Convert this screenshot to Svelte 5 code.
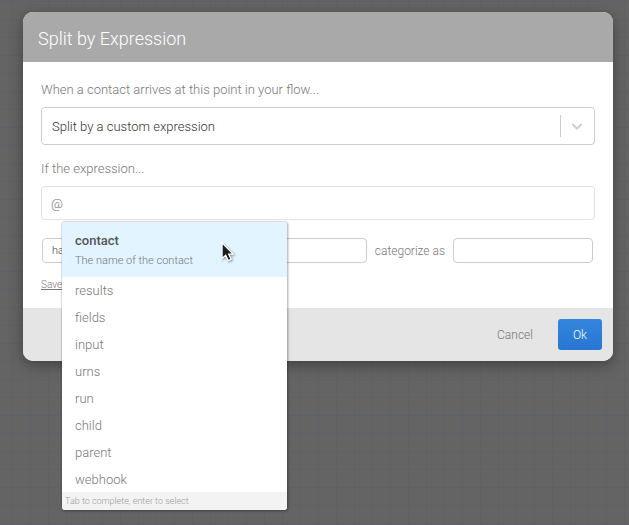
<script>
  let kind = $state('expression');
  let expression = $state('@');
  let operator = $state('phrase');
  let argument = $state('');
  let category = $state('');
  let selected = $state(0);

  const options = [
    { name: 'contact', summary: 'The name of the contact' },
    { name: 'results', summary: 'Results collected in this flow' },
    { name: 'fields', summary: 'Custom fields on the contact' },
    { name: 'input', summary: 'The last input from the contact' },
    { name: 'urns', summary: 'URNs on the contact' },
    { name: 'run', summary: 'Run details' },
    { name: 'child', summary: 'Run details after running a child flow' },
    { name: 'parent', summary: 'Run details if run by a parent flow' },
    { name: 'webhook', summary: 'The parsed response of the last webhook' }
  ];
</script>

<main>
  <section class="dialog" role="dialog" aria-labelledby="title">
    <header>
      <h1 id="title">Split by Expression</h1>
    </header>

    <form id="router" class="body">
      <label for="kind">When a contact arrives at this point in your flow...</label>
      <div class="picker">
        <select id="kind" bind:value={kind}>
          <option value="expression">Split by a custom expression</option>
        </select>
        <span class="divider"></span>
        <svg class="chevron" viewBox="0 0 20 20" aria-hidden="true">
          <path d="M4.516 7.548c0.436-0.446 1.043-0.481 1.576 0l3.908 3.747 3.908-3.747c0.533-0.481 1.141-0.446 1.574 0 0.436 0.445 0.408 1.197 0 1.615-0.406 0.418-4.695 4.502-4.695 4.502-0.217 0.223-0.502 0.335-0.787 0.335s-0.57-0.112-0.789-0.335c0 0-4.287-4.084-4.695-4.502s-0.436-1.17 0-1.615z" />
        </svg>
      </div>

      <label for="expression">If the expression...</label>
      <div class="completion">
        <input id="expression" type="text" autocomplete="off" bind:value={expression} />
        <div class="popup">
          <ul role="listbox" aria-label="Completions">
            {#each options as option, i}
              <li
                role="option"
                aria-selected={i === selected}
                class:selected={i === selected}
                onmouseenter={() => (selected = i)}
              >
                <span class="name">{option.name}</span>
                {#if i === selected}
                  <span class="summary">{option.summary}</span>
                {/if}
              </li>
            {/each}
          </ul>
          <p class="hint">Tab to complete, enter to select</p>
          <svg class="pointer" viewBox="0 0 14 22" aria-hidden="true">
            <path d="M1 1V18L5 14.5L7.8 20.5L11 19L8.3 13.3H13.2Z" fill="#1c1c1c" stroke="#fff" stroke-width="1.4" />
          </svg>
        </div>
      </div>

      <div class="case">
        <select class="operator" aria-label="Operator" bind:value={operator}>
          <option value="phrase">has the phrase</option>
        </select>
        <input class="argument" type="text" aria-label="Argument" bind:value={argument} />
        <label for="category">categorize as</label>
        <input id="category" type="text" bind:value={category} />
      </div>

      <a class="save" href="#save">Save</a>
    </form>

    <footer>
      <button type="button" class="cancel">Cancel</button>
      <button type="submit" class="ok" form="router">Ok</button>
    </footer>
  </section>
</main>

<style>
  :global(body) {
    margin: 0;
  }

  main {
    box-sizing: border-box;
    min-height: 100vh;
    padding: 12px 16px 12px 23px;
    background-color: #646464;
    background-image:
      linear-gradient(to right, #5d616a 1px, transparent 1px),
      linear-gradient(to bottom, #5d616a 1px, transparent 1px);
    background-size: 18px 18px;
    background-position: 12px 1px;
    font-family: Roboto, sans-serif;
    font-weight: 300;
    font-size: 13px;
    line-height: 16px;
    color: #777;
  }

  main * {
    box-sizing: border-box;
  }

  input,
  select,
  button {
    margin: 0;
    font: inherit;
    color: inherit;
    outline: none;
  }

  select {
    appearance: none;
    background: #fff;
  }

  .dialog {
    border-radius: 10px;
    background: #fff;
    box-shadow: 0 4px 14px rgba(0, 0, 0, 0.35);
  }

  header {
    padding: 15px 15px 11px;
    border-radius: 10px 10px 0 0;
    background: #a9a9a9;
  }

  h1 {
    margin: 0;
    font-size: 18px;
    line-height: 24px;
    font-weight: 300;
    color: #fff;
  }

  .body {
    display: flex;
    flex-direction: column;
    padding: 20px 18px 15px;
  }

  .picker {
    display: flex;
    align-items: center;
    height: 38px;
    margin: 9px 0 16px;
    padding-right: 8px;
    border: 1px solid #ccc;
    border-radius: 4px;
    color: #333;
  }

  .picker select {
    flex: 1;
    height: 36px;
    padding: 2px 10px 0;
    border: 0;
    border-radius: 4px;
  }

  .divider {
    width: 1px;
    height: 22px;
    background: #ccc;
  }

  .chevron {
    width: 18px;
    height: 18px;
    margin-left: 7px;
    fill: #ccc;
  }

  .completion {
    position: relative;
    margin: 9px 0 18px;
  }

  .completion input {
    display: block;
    width: 100%;
    height: 34px;
    padding: 0 9px;
    border: 1px solid #e2e2e2;
    border-radius: 4px;
  }

  .popup {
    position: absolute;
    z-index: 1;
    top: 36px;
    left: 21px;
    width: 225px;
    border-radius: 3px;
    background: #fff;
    box-shadow: 0 0 1px 1px rgba(0, 0, 0, 0.12), 1px 1px 2px 1px rgba(0, 0, 0, 0.14);
  }

  ul {
    margin: 0 0 -1px;
    padding: 0;
    list-style: none;
  }

  li {
    padding: 6px 13px 5px;
  }

  li.selected {
    padding: 11px 13px 8px;
    border-radius: 3px 3px 0 0;
    background: #e1f4ff;
  }

  .name,
  .summary {
    display: block;
  }

  .selected .name {
    font-weight: 500;
    color: #555;
  }

  .summary {
    margin-top: 4px;
    font-size: 11px;
  }

  .hint {
    margin: 0;
    padding: 1px 3px;
    border-radius: 0 0 3px 3px;
    background: #f3f3f3;
    font-size: 9px;
    color: #999;
  }

  .pointer {
    position: absolute;
    top: 20px;
    left: 159px;
    width: 13px;
    height: 20px;
    filter: drop-shadow(1px 1px 1px rgba(0, 0, 0, 0.4));
  }

  .case {
    display: flex;
    align-items: center;
    padding: 0 2px 0 1px;
  }

  .case select,
  .case input {
    height: 25px;
    padding: 0 9px;
    border: 1px solid #ccc;
    border-radius: 4px;
    font-size: 11px;
  }

  .case .operator {
    width: 130px;
    margin-right: 9px;
    color: #444;
  }

  .case .argument {
    flex: 1;
    min-width: 0;
  }

  .case label {
    margin: 0 8px;
    font-size: 12px;
  }

  .case #category {
    width: 140px;
  }

  .save {
    align-self: flex-start;
    margin-top: 14px;
    font-size: 10px;
    color: inherit;
  }

  footer {
    display: flex;
    justify-content: flex-end;
    gap: 10px;
    padding: 11px;
    border-radius: 0 0 10px 10px;
    background: #e5e5e5;
  }

  button {
    height: 31px;
    padding: 0 15px;
    border: 0;
    border-radius: 3px;
    background: none;
    font-size: 12px;
    cursor: pointer;
  }

  .ok {
    background: linear-gradient(#3386de, #2876d2);
    color: #fff;
  }
</style>
